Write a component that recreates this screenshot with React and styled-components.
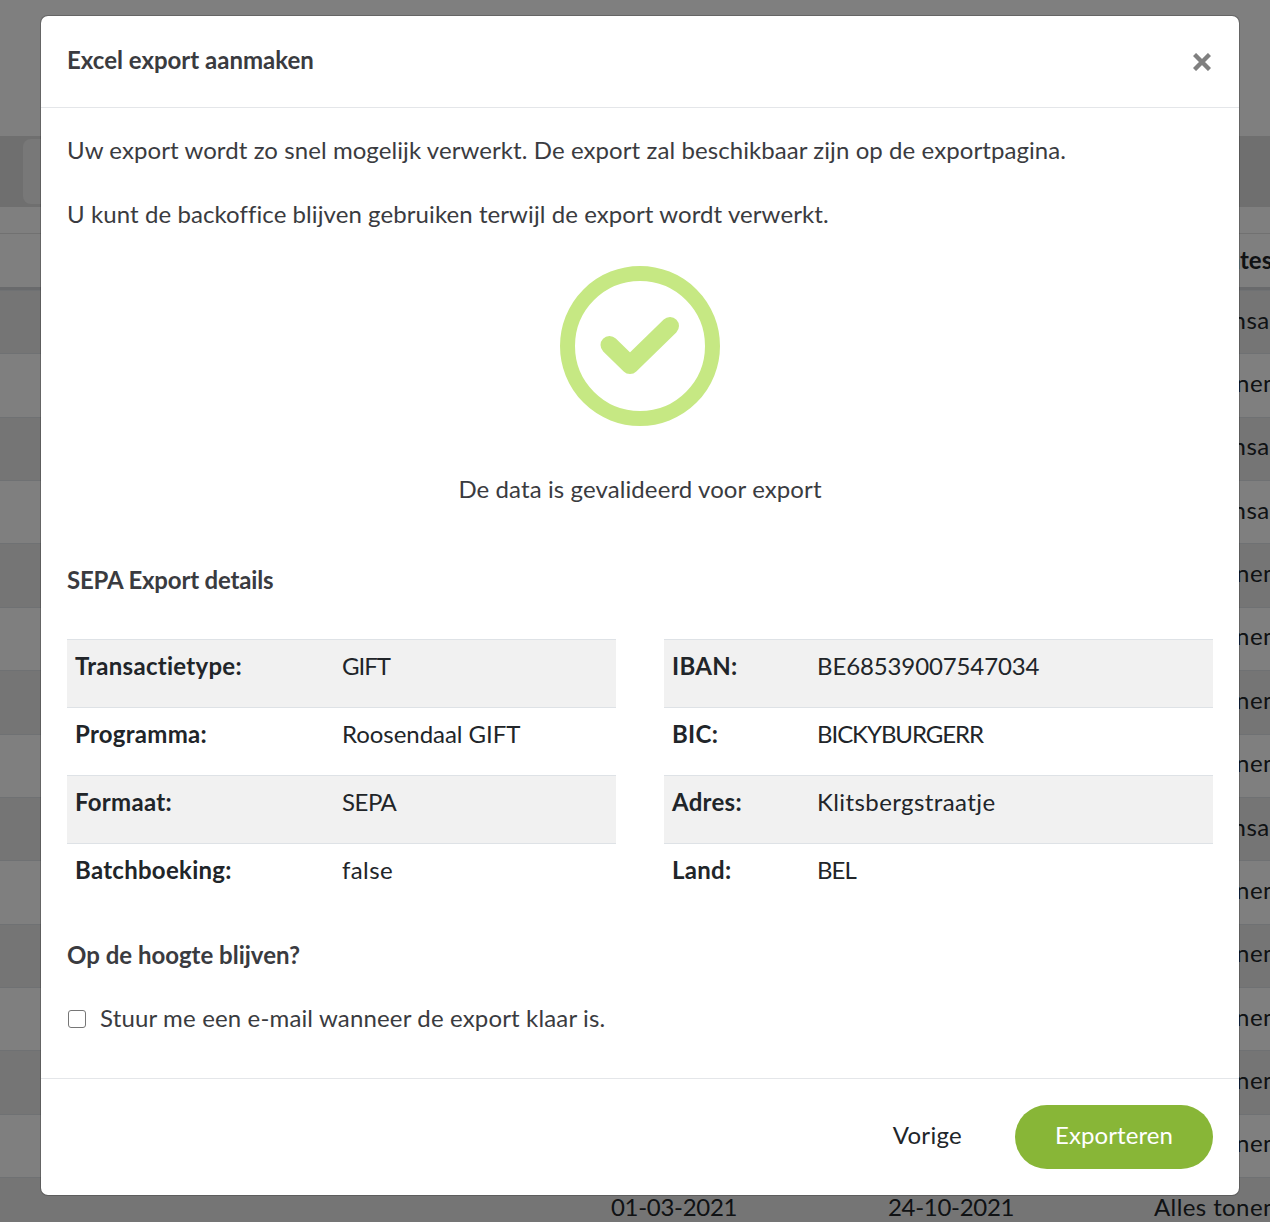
import React from 'react';
import styled, { createGlobalStyle } from 'styled-components';

const Global = createGlobalStyle`
  html, body { margin: 0; padding: 0; background: #fff; }
  body { font-family: Lato, "Noto Sans", sans-serif; font-size: 24px; line-height: 36px; color: #212529; }
  * { box-sizing: border-box; }
`;

const Page = styled.div`
  position: relative;
  width: 1270px;
  height: 1222px;
  overflow: hidden;
`;
const TopBar = styled.div`height: 136px;`;
const FilterBand = styled.div`
  height: 71px;
  background: #dedede;
  padding: 3px 0 3px 23px;
`;
const FilterChip = styled.div`
  width: 200px;
  height: 65px;
  border-radius: 8px;
  background: #f0f0f0;
`;
const Spacer = styled.div`height: 26px;`;
const HeadCell = styled.span`white-space: nowrap;`;
const DateCell = styled.span`
  white-space: nowrap;
  letter-spacing: -0.3px;
`;
const ActionCell = styled.span`
  white-space: nowrap;
  letter-spacing: 0.4px;
`;
const HeadRow = styled.div`
  display: grid;
  grid-template-columns: 1164px auto;
  align-items: center;
  height: 57px;
  padding-bottom: 2px;
  border-top: 1px solid #e2e2e2;
  border-bottom: 3px solid #d2d5d8;
  font-weight: 700;
`;
const TableRow = styled.div`
  display: grid;
  grid-template-columns: 611px 277px 266px auto;
  align-items: center;
  height: 63.36px;
  padding-bottom: 5px;
  border-top: 1px solid #dee2e6;
  background: ${p => (p.$odd ? '#ebebeb' : '#fff')};
`;
const Backdrop = styled.div`
  position: absolute;
  inset: 0;
  background: rgba(0, 0, 0, 0.5);
  padding: 15px 30px 0 40px;
`;
const Modal = styled.div`
  width: 1200px;
  height: 1181px;
  display: flex;
  flex-direction: column;
  background: #fff;
  border: 1px solid rgba(0, 0, 0, 0.2);
  border-radius: 8px;
  color: #3a3b40;
  background-clip: padding-box;
`;
const Header = styled.header`
  height: 92px;
  flex: none;
  display: flex;
  align-items: center;
  justify-content: space-between;
  padding: 0 28px 3px 26px;
  border-bottom: 1px solid #e4e6e9;
`;
const Title = styled.h5`
  margin: 0;
  font-size: 24px;
  font-weight: 700;
  line-height: 36px;
`;
const CloseButton = styled.button`
  display: flex;
  width: 18px;
  height: 18px;
  padding: 0;
  margin-top: 4px;
  border: 0;
  background: none;
`;
const Body = styled.div`
  flex: 1;
  padding: 24px 26px 0;
`;
const Para = styled.p`
  margin: 0 0 28px;
  letter-spacing: 0.08px;
`;
const IconWrap = styled.div`
  display: flex;
  justify-content: center;
  margin-top: 34px;
`;
const Caption = styled.p`
  margin: 45px 0 0;
  text-align: center;
  letter-spacing: 0.1px;
`;
const SectionTitle = styled.h6`
  margin: 0;
  font-size: 24px;
  font-weight: 700;
  line-height: 36px;
`;
const DetailsTitle = styled(SectionTitle)`
  margin-top: 55px;
  letter-spacing: -0.18px;
`;
const Columns = styled.div`
  display: grid;
  grid-template-columns: 549px 549px;
  column-gap: 48px;
  margin-top: 41px;
`;
const DetailTable = styled.div`color: #212529;`;
const DetailRow = styled.div`
  display: grid;
  grid-template-columns: ${p => p.$label}px 1fr;
  height: 68px;
  padding-top: 8px;
  border-top: 1px solid #dee2e6;
  background: ${p => (p.$shaded ? '#f1f1f1' : '#fff')};
`;
const DetailLabel = styled.span`
  padding-left: 8px;
  font-weight: 700;
  letter-spacing: 0.28px;
`;
const DetailValue = styled.span`
  padding-left: 8px;
  letter-spacing: ${p => p.$spacing}px;
`;
const NotifyTitle = styled(SectionTitle)`margin-top: 26px;`;
const CheckRow = styled.label`
  display: flex;
  align-items: center;
  gap: 14px;
  margin-top: 27px;
  letter-spacing: 0.15px;
`;
const CheckBox = styled.span`
  width: 18px;
  height: 18px;
  margin: 2px 0 0 1px;
  flex: none;
  border: 1.5px solid #767676;
  border-radius: 3px;
  background: #fff;
`;
const Footer = styled.footer`
  height: 117px;
  flex: none;
  display: flex;
  justify-content: flex-end;
  align-items: center;
  gap: 53px;
  padding: 0 26px;
  border-top: 1px solid #e4e6e9;
`;
const BackButton = styled.button`
  padding: 0 0 5px;
  border: 0;
  background: none;
  font: inherit;
  letter-spacing: 0.3px;
  color: #212529;
`;
const ExportButton = styled.button`
  width: 198px;
  height: 64px;
  padding: 0 0 5px;
  border: 0;
  border-radius: 32px;
  background: #88b637;
  color: #fff;
  font: inherit;
  letter-spacing: 0.1px;
`;

const actions = ['Alle transacties', 'Alles tonen', 'Alle transacties', 'Alle transacties', 'Alles tonen', 'Alles tonen', 'Alles tonen', 'Alles tonen', 'Alle transacties', 'Alles tonen', 'Alles tonen', 'Alles tonen', 'Alles tonen', 'Alles tonen', 'Alles tonen'];
const left = [['Transactietype:', 'GIFT', -1], ['Programma:', 'Roosendaal GIFT', -0.05], ['Formaat:', 'SEPA', -0.5], ['Batchboeking:', 'false', 0.4]];
const right = [['IBAN:', 'BE68539007547034', -0.12], ['BIC:', 'BICKYBURGERR', -1.05], ['Adres:', 'Klitsbergstraatje', 0.4], ['Land:', 'BEL', -1]];

function Details({ rows, label }) {
  return (
    <DetailTable>
      {rows.map(([k, v, s], i) => (
        <DetailRow key={k} $label={label} $shaded={i % 2 === 0}>
          <DetailLabel>{k}</DetailLabel>
          <DetailValue $spacing={s}>{v}</DetailValue>
        </DetailRow>
      ))}
    </DetailTable>
  );
}

export default function App() {
  return (
    <>
      <Global />
      <Page>
        <TopBar />
        <FilterBand><FilterChip /></FilterBand>
        <Spacer />
        <HeadRow><span /><HeadCell>Templates</HeadCell></HeadRow>
        {actions.map((a, i) => (
          <TableRow key={i} $odd={i % 2 === 0}>
            <span />
            <DateCell>01-03-2021</DateCell>
            <DateCell>24-10-2021</DateCell>
            <ActionCell>{a}</ActionCell>
          </TableRow>
        ))}
        <Backdrop>
          <Modal>
            <Header>
              <Title>Excel export aanmaken</Title>
              <CloseButton aria-label="Sluiten">
                <svg width="18" height="18" viewBox="0 0 18 18"><path d="M1.5 1.5 L16.5 16.5 M16.5 1.5 L1.5 16.5" stroke="#808080" strokeWidth="4.4" fill="none" /></svg>
              </CloseButton>
            </Header>
            <Body>
              <Para>Uw export wordt zo snel mogelijk verwerkt. De export zal beschikbaar zijn op de exportpagina.</Para>
              <Para>U kunt de backoffice blijven gebruiken terwijl de export wordt verwerkt.</Para>
              <IconWrap>
                <svg width="160" height="160" viewBox="0 0 160 160" fill="none">
                  <circle cx="80" cy="80" r="72.5" stroke="#c6e883" strokeWidth="15" />
                  <path d="M49.5 79 L70 99 L110 60" stroke="#c6e883" strokeWidth="18" strokeLinecap="round" strokeLinejoin="round" />
                </svg>
              </IconWrap>
              <Caption>De data is gevalideerd voor export</Caption>
              <DetailsTitle>SEPA Export details</DetailsTitle>
              <Columns>
                <Details rows={left} label={267} />
                <Details rows={right} label={145} />
              </Columns>
              <NotifyTitle>Op de hoogte blijven?</NotifyTitle>
              <CheckRow><CheckBox />Stuur me een e-mail wanneer de export klaar is.</CheckRow>
            </Body>
            <Footer>
              <BackButton>Vorige</BackButton>
              <ExportButton>Exporteren</ExportButton>
            </Footer>
          </Modal>
        </Backdrop>
      </Page>
    </>
  );
}
